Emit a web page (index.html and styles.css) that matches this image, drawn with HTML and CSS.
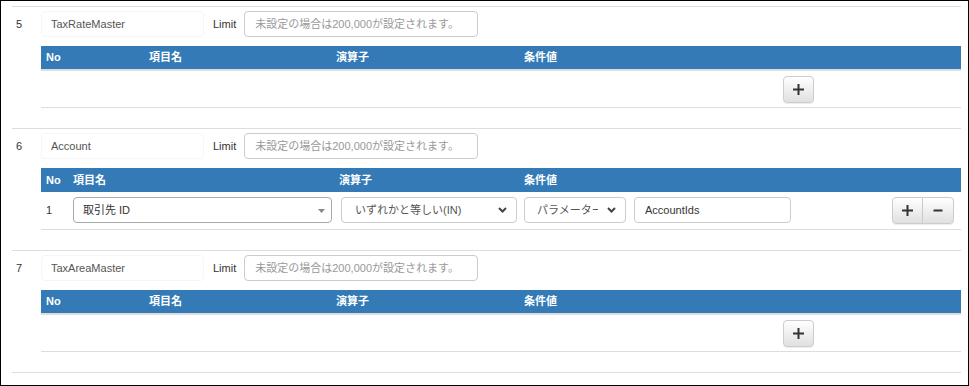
FILE: index.html
```html
<!DOCTYPE html>
<html lang="ja">
<head>
    <meta charset="UTF-8">
    <title>抽出条件</title>
    <link rel="stylesheet" href="styles.css">
</head>
<body>
<div class="frame">

    <!-- 5 -->
    <div class="section">
        <div class="top">
            <span class="num">5</span>
            <input class="name" type="text" value="TaxRateMaster">
            <span class="label">Limit</span>
            <input class="limit" type="text" placeholder="未設定の場合は200,000が設定されます。">
        </div>
        <div class="cond">
            <div class="thead cols-empty">
                <span>No</span><span>項目名</span><span>演算子</span><span>条件値</span><span></span>
            </div>
            <div class="row cols-empty">
                <span></span><span></span><span></span><span></span>
                <span><button class="btn" type="button"><svg width="11" height="11" viewBox="0 0 11 11"><path d="M4.5 0h2v4.5h4.5v2h-4.5v4.5h-2v-4.5h-4.5v-2h4.5z" fill="#333"/></svg></button></span>
            </div>
        </div>
    </div>

    <!-- 6 -->
    <div class="section">
        <div class="top">
            <span class="num">6</span>
            <input class="name" type="text" value="Account">
            <span class="label">Limit</span>
            <input class="limit" type="text" placeholder="未設定の場合は200,000が設定されます。">
        </div>
        <div class="cond">
            <div class="thead thead-filled cols-filled">
                <span>No</span><span>項目名</span><span class="op-head">演算子</span><span>条件値</span><span></span><span></span>
            </div>
            <div class="row row-filled cols-filled">
                <span class="rowno">1</span>
                <span><div class="sel sel-field">取引先 ID<svg class="tri" width="7" height="4" viewBox="0 0 7 4"><path d="M0 0h7l-3.5 4z" fill="#888"/></svg></div></span>
                <span><div class="sel sel-op">いずれかと等しい(IN)<svg class="chev" width="9" height="6" viewBox="0 0 9 6"><path d="M1 1l3.5 3.5 3.5-3.5" stroke="#444" stroke-width="2" fill="none"/></svg></div></span>
                <span><div class="sel sel-type"><span class="clip">パラメーター</span><svg class="chev" width="9" height="6" viewBox="0 0 9 6"><path d="M1 1l3.5 3.5 3.5-3.5" stroke="#444" stroke-width="2" fill="none"/></svg></div></span>
                <span><input class="val" type="text" value="AccountIds"></span>
                <span class="btns">
                    <button class="btn btn-left" type="button"><svg width="11" height="11" viewBox="0 0 11 11"><path d="M4.5 0h2v4.5h4.5v2h-4.5v4.5h-2v-4.5h-4.5v-2h4.5z" fill="#333"/></svg></button><button class="btn btn-right" type="button"><svg width="10" height="11" viewBox="0 0 10 11"><path d="M0.5 4.5h9v2h-9z" fill="#333"/></svg></button>
                </span>
            </div>
        </div>
    </div>

    <!-- 7 -->
    <div class="section last">
        <div class="top">
            <span class="num">7</span>
            <input class="name" type="text" value="TaxAreaMaster">
            <span class="label">Limit</span>
            <input class="limit" type="text" placeholder="未設定の場合は200,000が設定されます。">
        </div>
        <div class="cond">
            <div class="thead cols-empty">
                <span>No</span><span>項目名</span><span>演算子</span><span>条件値</span><span></span>
            </div>
            <div class="row cols-empty">
                <span></span><span></span><span></span><span></span>
                <span><button class="btn" type="button"><svg width="11" height="11" viewBox="0 0 11 11"><path d="M4.5 0h2v4.5h4.5v2h-4.5v4.5h-2v-4.5h-4.5v-2h4.5z" fill="#333"/></svg></button></span>
            </div>
        </div>
    </div>

</div>
</body>
</html>
```

FILE: styles.css
```css
* {
    box-sizing: border-box;
}
body {
    margin: 0;
    font-family: "Liberation Sans", Arial, "Noto Sans CJK JP", sans-serif;
    font-size: 11px;
    color: #333;
    background-color: white;
}
.frame {
    height: 386px;
    border: 1px solid #000;
    padding: 5px 7px 0 11px;
}
.section {
    border-top: 1px solid #ddd;
    padding: 4px 0 20px 4px;
}
.section.last {
    border-bottom: 1px solid #ddd;
}
.top {
    display: flex;
    align-items: center;
    height: 26px;
}
.num {
    width: 25px;
}
input {
    font-family: inherit;
    font-size: 11px;
    outline: none;
}
.name {
    width: 163px;
    height: 26px;
    border: 1px solid #f6f6f6;
    border-radius: 4px;
    padding: 0 9px;
    color: #555;
}
.label {
    margin-left: 9px;
}
.limit {
    margin-left: 8px;
    width: 234px;
    height: 26px;
    border: 1px solid #ccc;
    border-radius: 4px;
    padding: 0 10px;
}
.limit::placeholder {
    color: #999;
}
.cond {
    margin: 9px 0 0 25px;
}
.thead {
    display: grid;
    height: 25px;
    line-height: 23px;
    background-color: #337ab7;
    border-bottom: 2px solid #ddd;
    color: white;
    font-weight: bold;
}
.thead span {
    padding-left: 5px;
}
.thead-filled {
    height: 24px;
    line-height: 24px;
    margin-top: 1px;
    border-bottom: none;
}
.thead-filled .op-head {
    padding-left: 4px;
}
.cols-empty {
    grid-template-columns: 103px 187px 188px 259px 1fr;
}
.cols-filled {
    grid-template-columns: 27px 267px 184px 110px 263px 1fr;
}
.row {
    display: grid;
    align-items: start;
    padding: 5px 0 4px;
    border-bottom: 1px solid #ddd;
}
.row > span {
    padding-left: 5px;
}
.row-filled {
    padding: 5px 0 5px;
}
.rowno {
    line-height: 26px;
}
.btn {
    display: inline-flex;
    align-items: center;
    justify-content: center;
    width: 31px;
    height: 27px;
    padding: 0;
    border: 1px solid #ccc;
    border-radius: 4px;
    background: linear-gradient(#fff, #e0e0e0);
    box-shadow: inset 0 1px 0 rgba(255, 255, 255, 0.15), 0 1px 1px rgba(0, 0, 0, 0.075);
    vertical-align: top;
}
.row > .btns {
    display: flex;
    padding-left: 0;
}
.btn-left {
    border-radius: 4px 0 0 4px;
}
.btn-right {
    width: 32px;
    margin-left: -1px;
    border-radius: 0 4px 4px 0;
}
.sel {
    position: relative;
    height: 26px;
    line-height: 24px;
    border: 1px solid #ccc;
    border-radius: 4px;
    color: #555;
    white-space: nowrap;
    overflow: hidden;
}
.sel-field {
    width: 259px;
    border-color: #aaa;
    padding-left: 9px;
    color: #333;
}
.sel-op {
    width: 176px;
    margin-left: 1px;
    padding-left: 13px;
}
.sel-type {
    width: 102px;
    padding-left: 12px;
}
.clip {
    display: inline-block;
    width: 61px;
    overflow: hidden;
    vertical-align: top;
}
.tri {
    position: absolute;
    right: 6px;
    top: 11px;
}
.chev {
    position: absolute;
    right: 9px;
    top: 9px;
}
.val {
    width: 157px;
    height: 26px;
    border: 1px solid #ccc;
    border-radius: 4px;
    padding: 0 10px;
    color: #333;
}
```
